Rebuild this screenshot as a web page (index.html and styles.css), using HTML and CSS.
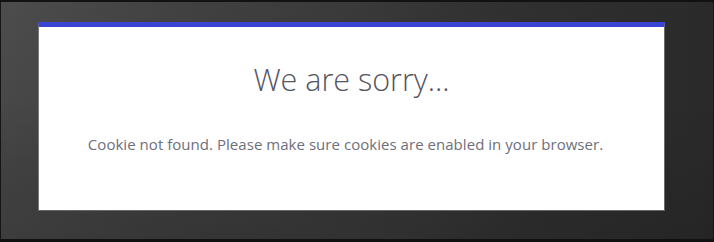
FILE: index.html
```html
<!DOCTYPE html>
<html lang="en">
<head>
<meta charset="utf-8">
<title>We are sorry...</title>
<link rel="stylesheet" href="styles.css">
</head>
<body>
<div class="frame">
  <div class="card">
    <h1 class="title">We are sorry...</h1>
    <p class="message">Cookie not found. Please make sure cookies are enabled in your browser.</p>
  </div>
</div>
</body>
</html>
```
FILE: styles.css
```css
html, body {
  margin: 0;
  padding: 0;
  background: #111;
}
.frame {
  box-sizing: border-box;
  width: 714px;
  height: 242px;
  border-top: 2px solid #121212;
  border-left: 1px solid #151515;
  border-right: 1px solid #151515;
  border-bottom: 3px solid #111;
  padding: 20px 0 0 37px;
  background:
    linear-gradient(160deg, rgba(255,255,255,0.04) 0%, rgba(255,255,255,0) 35%),
    linear-gradient(to bottom, rgba(0,0,0,0) 40%, rgba(0,0,0,0.12) 100%),
    linear-gradient(to right, #454545 0%, #3d3d3d 25%, #383838 50%, #2f2f2f 75%, #2a2a2a 100%);
}
.card {
  box-sizing: border-box;
  width: 627px;
  height: 189px;
  background: #fff;
  border-top: 5px solid #3a45d3;
  border-left: 1px solid #7a7a7a;
  border-right: 1px solid #6a6a6a;
  border-bottom: 1px solid #666;
  display: flex;
  flex-direction: column;
  align-items: center;
  font-family: "Open Sans", "Liberation Sans", sans-serif;
}
.title {
  margin: 33px 0 0;
  font-size: 30.5px;
  font-weight: 300;
  line-height: 38px;
  color: #55555f;
}
.message {
  margin: 36px 0 0;
  padding-right: 12px;
  font-size: 15px;
  letter-spacing: 0.04px;
  line-height: 20px;
  color: #6e6f7c;
}
```
